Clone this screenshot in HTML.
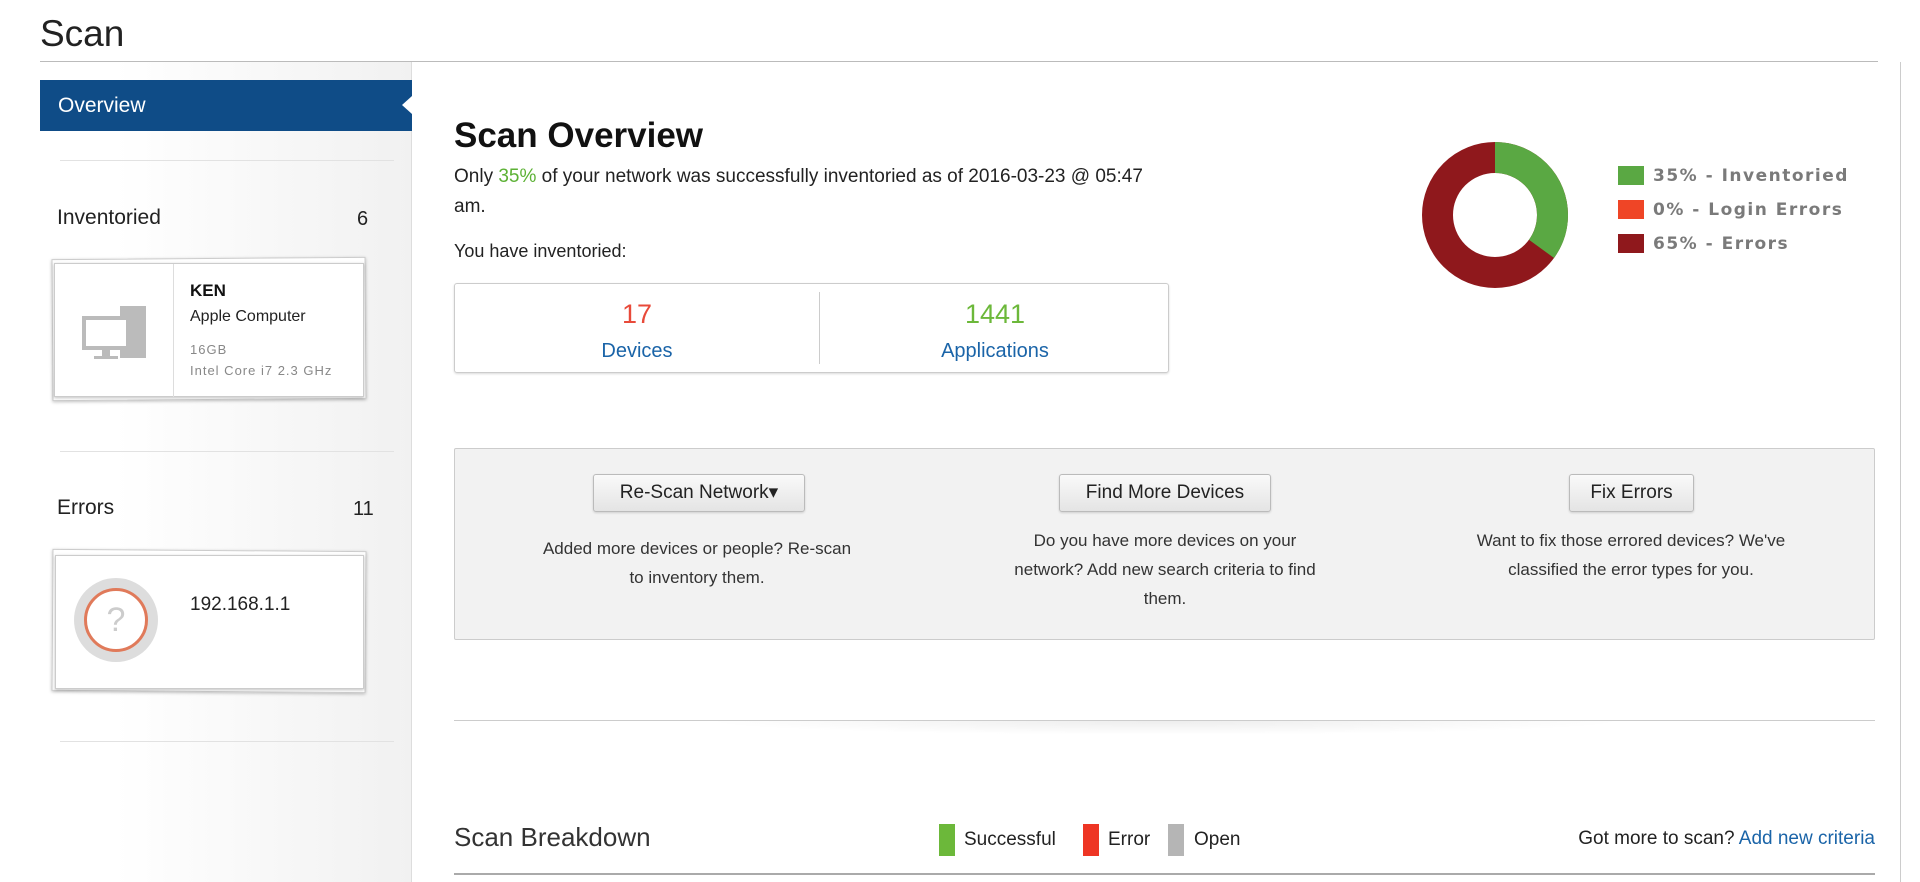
<!DOCTYPE html>
<html><head><meta charset="utf-8"><style>
*{margin:0;padding:0;box-sizing:border-box}
body{width:1920px;height:882px;background:#fff;font-family:"Liberation Sans",Arial,sans-serif;color:#222;position:relative;overflow:hidden}
.a{position:absolute}
.side{left:40px;top:62px;width:372px;height:820px;background:linear-gradient(to right,#fff 20%,#f1f1f1);border-right:1px solid #ddd}
.sep{height:1px;background:#e2e2e2;left:60px;width:334px}
.card{background:#fff;border:1px solid #ccc;box-shadow:0 1px 3px rgba(0,0,0,.25)}
.btn{background:linear-gradient(#fafafa,#e4e4e4);border:1px solid #bbb;border-radius:3px;font-size:19px;color:#222;text-align:center;line-height:36px;box-shadow:0 1px 2px rgba(0,0,0,.15)}
.desc{font-size:17px;color:#333;text-align:center;line-height:29px;width:320px}
.leg{font-family:"DejaVu Sans",sans-serif;font-weight:bold;color:#7a7a7a;font-size:17px;letter-spacing:1.5px}
</style></head><body>
<div class="a" style="left:40px;top:13px;font-size:37px;color:#222">Scan</div>
<div class="a" style="left:40px;top:61px;width:1838px;height:1px;background:#bbb"></div>
<div class="a" style="left:1900px;top:62px;width:1px;height:820px;background:#ccc"></div>
<div class="a side"></div>
<div class="a" style="left:40px;top:80px;width:372px;height:51px;background:#0f4c87"></div>
<div class="a" style="left:402px;top:96px;width:0;height:0;border-top:9px solid transparent;border-bottom:9px solid transparent;border-right:10px solid #fff"></div>
<div class="a" style="left:58px;top:94px;font-size:21px;color:#fff">Overview</div>
<div class="a sep" style="top:160px"></div>
<div class="a" style="left:57px;top:206px;font-size:21px">Inventoried</div>
<div class="a" style="left:357px;top:208px;font-size:20px">6</div>
<div class="a card" style="left:52px;top:258px;width:314px;height:142px;transform:rotate(-0.4deg)"></div>
<div class="a card" style="left:54px;top:263px;width:310px;height:134px">
 <div class="a" style="left:118px;top:0;width:1px;height:133px;background:#ddd"></div>
 <svg class="a" style="left:25px;top:40px" width="80" height="60" viewBox="0 0 80 60"><rect x="40" y="2" width="26" height="52" fill="#bbb"/><rect x="2" y="12" width="48" height="34" fill="#bbb"/><rect x="6" y="16" width="40" height="26" fill="#fff"/><rect x="22" y="46" width="8" height="6" fill="#bbb"/><rect x="14" y="52" width="24" height="3" fill="#bbb"/></svg>
 <div class="a" style="left:135px;top:17px;font-size:17px;font-weight:bold;color:#111">KEN</div>
 <div class="a" style="left:135px;top:44px;font-size:16px;color:#222">Apple Computer</div>
 <div class="a" style="left:135px;top:78px;font-size:13px;color:#888;letter-spacing:1px">16GB</div>
 <div class="a" style="left:135px;top:99px;font-size:13px;color:#888;letter-spacing:1px">Intel Core i7 2.3 GHz</div>
</div>
<div class="a sep" style="top:451px"></div>
<div class="a" style="left:57px;top:496px;font-size:21px">Errors</div>
<div class="a" style="left:353px;top:498px;font-size:20px">11</div>
<div class="a card" style="left:52px;top:550px;width:314px;height:142px;transform:rotate(0.4deg)"></div>
<div class="a card" style="left:55px;top:555px;width:309px;height:134px">
 <div class="a" style="left:18px;top:22px;width:84px;height:84px;border-radius:50%;background:#ddd"></div>
 <div class="a" style="left:28px;top:32px;width:64px;height:64px;border-radius:50%;background:#fff;border:3px solid #e07a5a;text-align:center;line-height:58px;font-size:34px;color:#ccc">?</div>
 <div class="a" style="left:134px;top:38px;font-size:19px;color:#222">192.168.1.1</div>
</div>
<div class="a sep" style="top:741px"></div>

<div class="a" style="left:454px;top:116px;font-size:35px;font-weight:bold;color:#111">Scan Overview</div>
<div class="a" style="left:454px;top:162px;font-size:19px;line-height:30px;width:700px">Only <span style="color:#5cb135">35%</span> of your network was successfully inventoried as of 2016-03-23 @ 05:47 am.</div>
<div class="a" style="left:454px;top:241px;font-size:18px">You have inventoried:</div>
<div class="a" style="left:454px;top:283px;width:715px;height:90px;border:1px solid #ccc;border-radius:3px;box-shadow:0 1px 2px rgba(0,0,0,.15)">
 <div class="a" style="left:364px;top:8px;width:1px;height:72px;background:#ccc"></div>
 <div class="a" style="left:0;top:15px;width:364px;text-align:center;font-size:27px;color:#e84a3a">17</div>
 <div class="a" style="left:0;top:56px;width:364px;text-align:center;font-size:20px;color:#1a64a8">Devices</div>
 <div class="a" style="left:365px;top:15px;width:350px;text-align:center;font-size:27px;color:#6cb83a">1441</div>
 <div class="a" style="left:365px;top:56px;width:350px;text-align:center;font-size:20px;color:#1a64a8">Applications</div>
</div>
<svg class="a" style="left:1420px;top:140px" width="150" height="150" viewBox="-75 -75 150 150">
 <circle r="57.5" fill="none" stroke="#8f181c" stroke-width="31"/>
 <circle r="57.5" fill="none" stroke="#5aa843" stroke-width="31" stroke-dasharray="126.4 400" transform="rotate(-90)"/>
</svg>
<div class="a" style="left:1618px;top:166px;width:26px;height:19px;background:#5aa843"></div>
<div class="a" style="left:1618px;top:200px;width:26px;height:19px;background:#ef4526"></div>
<div class="a" style="left:1618px;top:234px;width:26px;height:19px;background:#8f181c"></div>
<div class="a leg" style="left:1653px;top:166px">35% - Inventoried</div>
<div class="a leg" style="left:1653px;top:200px">0% - Login Errors</div>
<div class="a leg" style="left:1653px;top:234px">65% - Errors</div>

<div class="a" style="left:454px;top:448px;width:1421px;height:192px;background:#f2f2f2;border:1px solid #ccc;border-radius:2px"></div>
<div class="a btn" style="left:593px;top:474px;width:212px;height:38px">Re-Scan Network&#9662;</div>
<div class="a btn" style="left:1059px;top:474px;width:212px;height:38px">Find More Devices</div>
<div class="a btn" style="left:1569px;top:474px;width:125px;height:38px">Fix Errors</div>
<div class="a desc" style="left:542px;top:534px;width:310px">Added more devices or people? Re-scan to inventory them.</div>
<div class="a desc" style="left:1005px;top:526px">Do you have more devices on your network? Add new search criteria to find them.</div>
<div class="a desc" style="left:1446px;top:526px;width:370px">Want to fix those errored devices? We've classified the error types for you.</div>

<div class="a" style="left:454px;top:720px;width:1421px;height:1px;background:#ccc"></div>
<div class="a" style="left:700px;top:721px;width:930px;height:14px;background:radial-gradient(ellipse at top,rgba(0,0,0,.07),rgba(0,0,0,0) 70%)"></div>
<div class="a" style="left:454px;top:822px;font-size:26px;color:#333">Scan Breakdown</div>
<div class="a" style="left:939px;top:824px;width:16px;height:32px;background:#6cb83a"></div>
<div class="a" style="left:964px;top:829px;font-size:19px">Successful</div>
<div class="a" style="left:1083px;top:824px;width:16px;height:32px;background:#ee3524"></div>
<div class="a" style="left:1108px;top:829px;font-size:19px">Error</div>
<div class="a" style="left:1168px;top:824px;width:16px;height:32px;background:#b5b5b5"></div>
<div class="a" style="left:1194px;top:829px;font-size:19px">Open</div>
<div class="a" style="right:45px;top:828px;font-size:19px;white-space:nowrap">Got more to scan? <span style="color:#1a64a8">Add new criteria</span></div>
<div class="a" style="left:454px;top:873px;width:1421px;height:2px;background:#aaa"></div>
</body></html>
